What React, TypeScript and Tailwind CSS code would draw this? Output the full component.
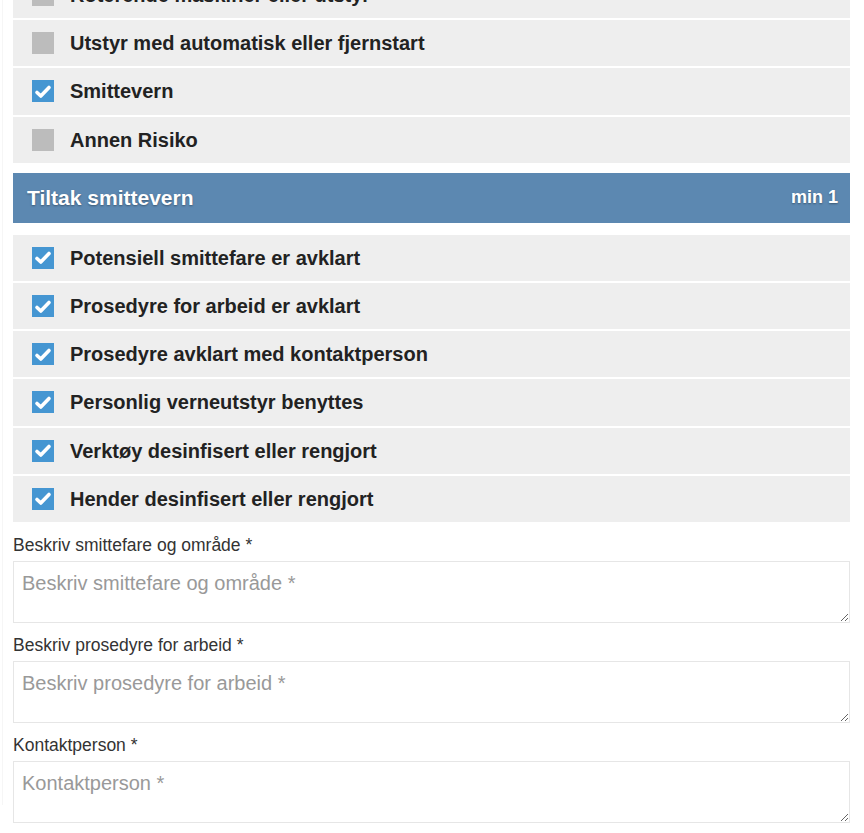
import React from "react";

const font = { fontFamily: '"Liberation Sans", Arial, sans-serif' };

function Check({ checked }: { checked: boolean }) {
  return (
    <div
      className={
        "w-[22px] h-[22px] shrink-0 flex items-center justify-center " +
        (checked ? "bg-[#4596d2]" : "bg-[#bcbcbc]")
      }
    >
      {checked && (
        <svg width="18" height="15" viewBox="0 0 18 15">
          <path
            d="M3 8.5 L6.8 12 L15 3.5"
            stroke="#ffffff"
            strokeWidth="3.6"
            fill="none"
            strokeLinecap="round"
            strokeLinejoin="round"
          />
        </svg>
      )}
    </div>
  );
}

function Row({ label, checked }: { label: string; checked: boolean }) {
  return (
    <div className="h-[46.2px] bg-[#eeeeee] flex items-center pl-[19px] gap-[16px]">
      <Check checked={checked} />
      <span className="text-[20px] font-bold text-[#222222] leading-none">{label}</span>
    </div>
  );
}

function Field({ label }: { label: string }) {
  return (
    <div className="flex flex-col">
      <div className="pt-[12px] mb-[5px] text-[17.5px] leading-[22px] text-[#333333]">{label}</div>
      <textarea
        placeholder={label}
        className="block w-full h-[62px] border border-[#e6e6e6] bg-white px-[8px] pt-[10px] text-[20px] leading-[23px] text-[#333333] placeholder:text-[#999999] outline-none"
        style={font}
      />
    </div>
  );
}

export default function App() {
  const top = [
    { label: "Roterende maskiner eller utstyr", checked: false },
    { label: "Utstyr med automatisk eller fjernstart", checked: false },
    { label: "Smittevern", checked: true },
    { label: "Annen Risiko", checked: false },
  ];
  const tiltak = [
    "Potensiell smittefare er avklart",
    "Prosedyre for arbeid er avklart",
    "Prosedyre avklart med kontaktperson",
    "Personlig verneutstyr benyttes",
    "Verktøy desinfisert eller rengjort",
    "Hender desinfisert eller rengjort",
  ];
  return (
    <div className="w-[864px] h-[833px] overflow-hidden bg-white" style={font}>
      <div className="ml-[2px] h-full border-l border-[#f6f6f6]">
        <div className="ml-[10px] w-[837px] mt-[-28px]">
          <div className="flex flex-col gap-[2px]">
            {top.map((r) => (
              <Row key={r.label} label={r.label} checked={r.checked} />
            ))}
          </div>
          <div className="mt-[10px] h-[50px] bg-[#5c88b1] flex items-center justify-between pl-[14px] pr-[12px] text-white font-bold [text-shadow:0_1px_2px_rgba(0,0,0,0.35)]">
            <span className="text-[21px]">Tiltak smittevern</span>
            <span className="text-[18px]">min 1</span>
          </div>
          <div className="mt-[12px] flex flex-col gap-[2px]">
            {tiltak.map((t) => (
              <Row key={t} label={t} checked={true} />
            ))}
          </div>
          <div className="flex flex-col gap-[0px]">
            <Field label="Beskriv smittefare og område *" />
            <div className="-mt-[1px]">
              <Field label="Beskriv prosedyre for arbeid *" />
            </div>
            <div className="-mt-[1px]">
              <Field label="Kontaktperson *" />
            </div>
          </div>
        </div>
      </div>
    </div>
  );
}
